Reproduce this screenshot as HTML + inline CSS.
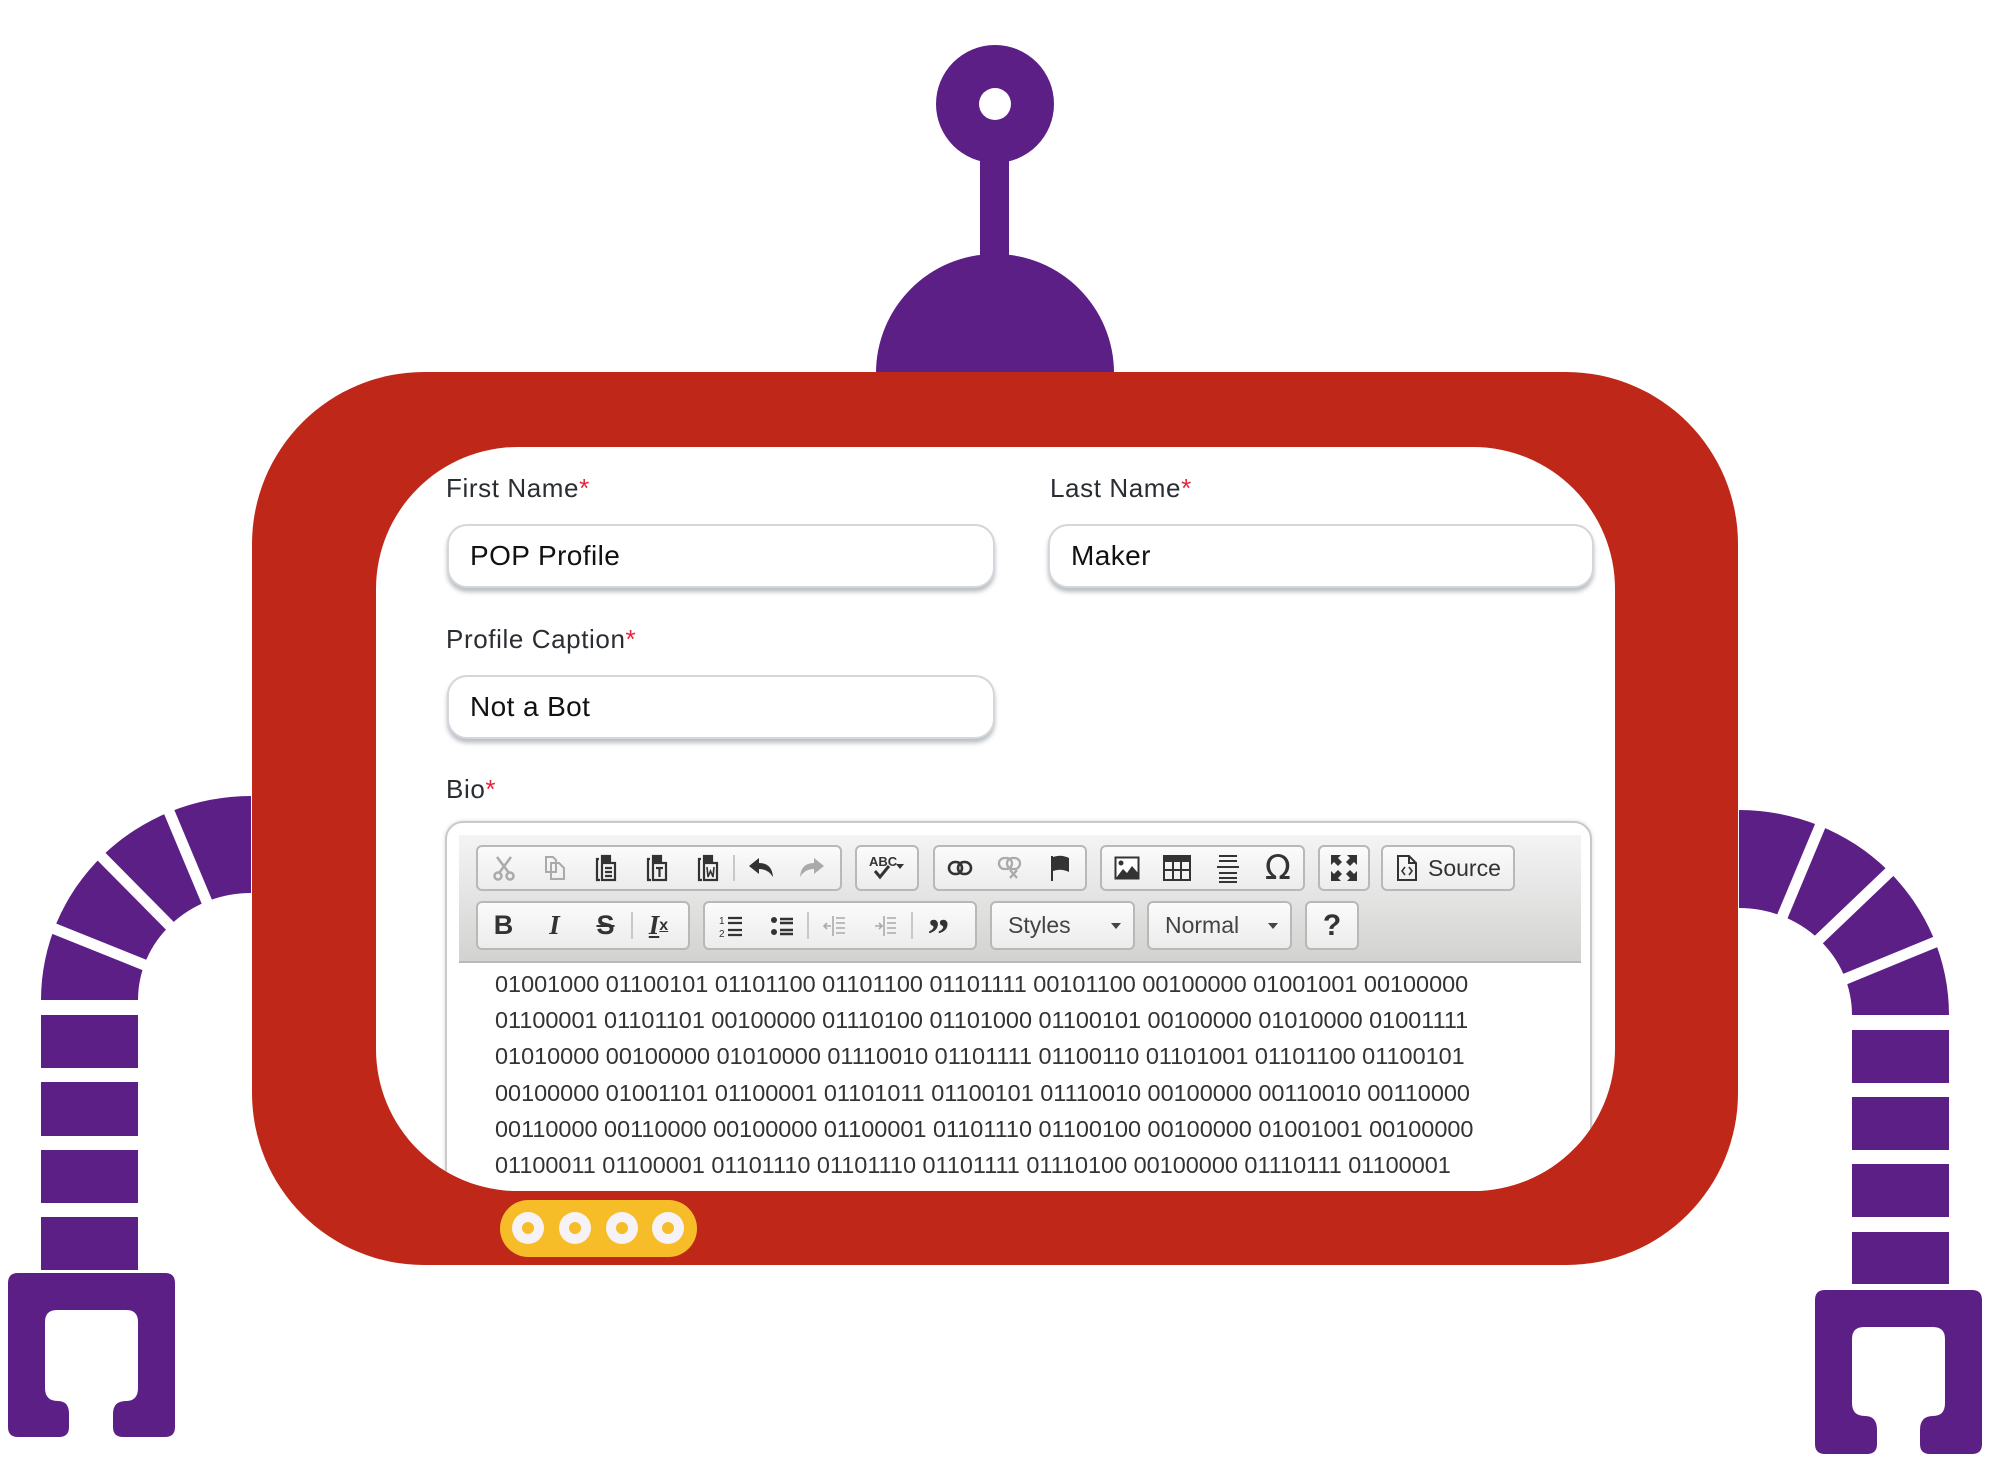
<!DOCTYPE html>
<html><head><meta charset="utf-8"><style>
*{box-sizing:border-box;margin:0;padding:0}
html,body{width:2000px;height:1470px;background:#fff;overflow:hidden;font-family:"Liberation Sans",sans-serif}
.abs{position:absolute}
#frame{position:absolute;left:252px;top:372px;width:1486px;height:893px;background:#bf2819;border-radius:172px}
#inner{position:absolute;left:376px;top:447px;width:1239px;height:744px;background:#fff;border-radius:142px;overflow:hidden}
.lbl{position:absolute;font-size:26px;letter-spacing:0.6px;color:#2a2e33;line-height:30px}
.lbl b{color:#e0283c;font-weight:normal}
.inp{position:absolute;height:64px;border:2px solid #d3d7db;border-radius:20px;background:#fff;box-shadow:0 4px 4px rgba(60,70,80,.35);font-size:28px;color:#111;padding-left:21px;line-height:60px;letter-spacing:0.4px}
#ed{position:absolute;left:69px;top:374px;width:1147px;height:600px;border:2px solid #c9c9c9;border-radius:18px;background:#fff;box-shadow:0 0 4px rgba(0,0,0,.15)}
#tb{position:absolute;left:12px;top:12px;width:1122px;height:128px;background:linear-gradient(#f4f4f4,#d2d3d1);border-bottom:2px solid #b9b9b9}
.g{position:absolute;border:2px solid #b8b8b8;border-radius:6px;background:linear-gradient(#fbfbfb,#ececec);display:flex;align-items:center}
.ic{width:51px;height:100%;display:flex;align-items:center;justify-content:center}
.sep{width:2px;height:60%;background:#c8c8c8}
.txt{position:absolute;left:48px;top:143px;font-size:23.45px;line-height:36.2px;color:#333;white-space:nowrap}
.dd{font-size:23px;color:#444;padding-left:16px;width:100%;position:relative}
.dd:after{content:"";position:absolute;right:12px;top:11px;border:5px solid transparent;border-top:6px solid #444}
</style></head><body>
<svg class="abs" style="left:0;top:0" width="2000" height="1470">
<g fill="#5c1f86">
<circle cx="995" cy="104" r="59"/>
<rect x="980" y="150" width="29" height="120"/>
<circle cx="995" cy="373" r="119"/>
<path d="M251 796 A210 204 0 0 0 41 1000 L138 1000 A113 107 0 0 1 251 893 Z"/>
<rect x="41" y="1015" width="97" height="53"/>
<rect x="41" y="1082" width="97" height="54"/>
<rect x="41" y="1150" width="97" height="53"/>
<rect x="41" y="1217" width="97" height="53"/>
<path d="M18 1273 H165 Q175 1273 175 1283 V1427 Q175 1437 165 1437 H123 Q113 1437 113 1427 V1414 Q113 1401 126 1401 Q138 1401 138 1388 V1322 Q138 1310 126 1310 H57 Q45 1310 45 1322 V1388 Q45 1401 58 1401 Q69 1401 69 1414 V1427 Q69 1437 59 1437 H18 Q8 1437 8 1427 V1283 Q8 1273 18 1273 Z"/>
<path d="M1739 810 A210 205 0 0 1 1949 1015 L1852 1015 A113 107 0 0 0 1739 908 Z"/>
<rect x="1852" y="1030" width="97" height="53"/>
<rect x="1852" y="1097" width="97" height="53"/>
<rect x="1852" y="1164" width="97" height="53"/>
<rect x="1852" y="1232" width="97" height="52"/>
<path d="M1825 1290 H1972 Q1982 1290 1982 1300 V1444 Q1982 1454 1972 1454 H1930 Q1920 1454 1920 1444 V1430 Q1920 1416 1933 1416 Q1945 1416 1945 1403 V1339 Q1945 1327 1933 1327 H1864 Q1852 1327 1852 1339 V1403 Q1852 1416 1865 1416 Q1877 1416 1877 1430 V1444 Q1877 1454 1867 1454 H1825 Q1815 1454 1815 1444 V1300 Q1815 1290 1825 1290 Z"/>
</g>
<circle cx="995" cy="104" r="16" fill="#fff"/>
<g stroke="#fff" stroke-width="11">
<line x1="40" y1="923" x2="152" y2="968"/>
<line x1="88" y1="843" x2="178" y2="934"/>
<line x1="160" y1="790" x2="209" y2="907"/>
<line x1="1826" y1="812" x2="1780" y2="922"/>
<line x1="1900" y1="862" x2="1812" y2="946"/>
<line x1="1950" y1="936" x2="1838" y2="982"/>
</g>
</svg>
<div id="frame"></div>
<div id="inner">
<div class="lbl" style="left:70px;top:26px">First Name<b>*</b></div>
<div class="lbl" style="left:674px;top:26px">Last Name<b>*</b></div>
<div class="inp" style="left:71px;top:77px;width:548px">POP Profile</div>
<div class="inp" style="left:672px;top:77px;width:546px">Maker</div>
<div class="lbl" style="left:70px;top:177px">Profile Caption<b>*</b></div>
<div class="inp" style="left:71px;top:228px;width:548px">Not a Bot</div>
<div class="lbl" style="left:70px;top:327px">Bio<b>*</b></div>
<div id="ed">
<div id="tb">
<div class="g" style="left:17px;top:10px;width:366px;height:46px">
<span class="ic"><svg width="24" height="26" viewBox="0 0 24 26" fill="none" stroke="#aaa" stroke-width="2.5"><path d="M5 2 L17 18 M19 2 L7 18"/><circle cx="6" cy="21" r="3.5"/><circle cx="18" cy="21" r="3.5"/></svg></span>
<span class="ic"><svg width="22" height="26" viewBox="0 0 22 26" fill="none" stroke="#aaa" stroke-width="2"><path d="M2 2 H9 L12 5 V17 H2Z M7 8 H15 L20 13 V24 H7Z"/></svg></span>
<span class="ic"><svg width="24" height="28" viewBox="0 0 24 28" fill="none" stroke="#333" stroke-width="2.2"><path d="M5 5 H3 V26 H6"/><rect x="8" y="2" width="8" height="5" fill="#333"/><rect x="8" y="9" width="13" height="17"/><path d="M11 14 H18 M11 18 H18 M11 22 H18"/></svg></span>
<span class="ic"><svg width="24" height="28" viewBox="0 0 24 28" fill="none" stroke="#333" stroke-width="2.2"><path d="M5 5 H3 V26 H6"/><rect x="8" y="2" width="8" height="5" fill="#333"/><rect x="8" y="9" width="13" height="17"/><path d="M11 14 H18 M14.5 14 V23"/></svg></span>
<span class="ic"><svg width="24" height="28" viewBox="0 0 24 28" fill="none" stroke="#333" stroke-width="2.2"><path d="M5 5 H3 V26 H6"/><rect x="8" y="2" width="8" height="5" fill="#333"/><rect x="8" y="9" width="13" height="17"/><path d="M11 13 L12 23 L14.5 17 L17 23 L18 13" stroke-width="1.6"/></svg></span>
<span class="sep"></span>
<span class="ic"><svg width="26" height="20" viewBox="0 0 26 20"><path d="M1 8 L11 0 V5 Q24 5 25 19 Q20 11 11 11 V16 Z" fill="#333"/></svg></span>
<span class="ic"><svg width="26" height="20" viewBox="0 0 26 20"><path d="M25 8 L15 0 V5 Q2 5 1 19 Q6 11 15 11 V16 Z" fill="#aaa"/></svg></span>
</div>
<div class="g" style="left:396px;top:10px;width:64px;height:46px;justify-content:center"><svg width="40" height="30" viewBox="0 0 40 30"><text x="2" y="13" font-size="13" font-family="Liberation Sans" font-weight="bold" fill="#333">ABC</text><path d="M8 18 L13 24 L22 13" stroke="#333" stroke-width="3" fill="none"/><path d="M29 11 H37 L33 16Z" fill="#333"/></svg></div>
<div class="g" style="left:474px;top:10px;width:154px;height:46px">
<span class="ic"><svg width="26" height="16" viewBox="0 0 26 16" fill="none" stroke="#333" stroke-width="2.6"><rect x="2" y="2" width="13" height="12" rx="6"/><rect x="11" y="2" width="13" height="12" rx="6"/></svg></span>
<span class="ic"><svg width="26" height="24" viewBox="0 0 26 24" fill="none" stroke="#aaa" stroke-width="2.3"><rect x="2" y="2" width="13" height="11" rx="5.5"/><rect x="10" y="2" width="13" height="11" rx="5.5"/><path d="M13 14 L20 22 M20 14 L13 22"/></svg></span>
<span class="ic"><svg width="22" height="28" viewBox="0 0 22 28"><rect x="2" y="2" width="2" height="25" fill="#333"/><path d="M4 3 Q12 0 20 4 V18 Q12 14 4 17Z" fill="#333"/></svg></span>
</div>
<div class="g" style="left:641px;top:10px;width:205px;height:46px">
<span class="ic"><svg width="26" height="24" viewBox="0 0 26 24"><rect x="1.5" y="1.5" width="23" height="21" fill="#fff" stroke="#333" stroke-width="2"/><circle cx="7" cy="7" r="2.5" fill="#333"/><path d="M2 22 L9 13 L13 17 L18 10 L24 17 V22Z" fill="#333"/></svg></span>
<span class="ic"><svg width="28" height="26" viewBox="0 0 28 26" fill="none" stroke="#333" stroke-width="2"><rect x="1" y="1" width="26" height="24"/><rect x="1" y="1" width="26" height="5" fill="#333"/><path d="M1 15 H27 M10 6 V25 M18 6 V25"/></svg></span>
<span class="ic"><svg width="24" height="30" viewBox="0 0 24 30" stroke="#333" stroke-width="2"><path d="M3 3 H21 M3 8 H21 M1 14 H23 M3 20 H21 M3 25 H21 M3 29 H21"/></svg></span>
<span class="ic" style="font-size:34px;color:#333;font-family:'DejaVu Sans',sans-serif">Ω</span>
</div>
<div class="g" style="left:859px;top:10px;width:52px;height:46px;justify-content:center"><svg width="28" height="28" viewBox="0 0 28 28" fill="#333"><path d="M1 1 H11 L8 4 L12 8 L8 12 L4 8 L1 11Z M27 1 H17 L20 4 L16 8 L20 12 L24 8 L27 11Z M1 27 H11 L8 24 L12 20 L8 16 L4 20 L1 17Z M27 27 H17 L20 24 L16 20 L20 16 L24 20 L27 17Z"/></svg></div>
<div class="g" style="left:922px;top:10px;width:134px;height:46px;padding-left:13px"><svg width="22" height="28" viewBox="0 0 22 28" fill="none" stroke="#333" stroke-width="2"><path d="M2 2 H13 L20 9 V26 H2Z M13 2 V9 H20"/><path d="M9 13 L6 17 L9 21 M13 13 L16 17 L13 21" stroke-width="1.6"/></svg><span style="font-size:23px;color:#333;margin-left:10px">Source</span></div>

<div class="g" style="left:17px;top:66px;width:214px;height:49px">
<span class="ic" style="font-size:27px;font-weight:bold;color:#333">B</span>
<span class="ic" style="font-size:27px;font-style:italic;font-family:'Liberation Serif',serif;font-weight:bold;color:#333">I</span>
<span class="ic" style="font-size:27px;font-weight:bold;color:#333;text-decoration:line-through">S</span>
<span class="sep"></span>
<span class="ic" style="font-size:27px;font-style:italic;font-family:'Liberation Serif',serif;font-weight:bold;color:#333;text-decoration:underline">I<sub style="font-size:16px;font-style:normal;font-family:'Liberation Sans'">x</sub></span>
</div>
<div class="g" style="left:244px;top:66px;width:274px;height:49px">
<span class="ic"><svg width="24" height="24" viewBox="0 0 24 24" stroke="#333" stroke-width="2.2"><path d="M9 4 H23 M9 9 H23 M9 16 H23 M9 21 H23"/><text x="0" y="10" font-size="10" fill="#333" stroke="none">1</text><text x="0" y="23" font-size="10" fill="#333" stroke="none">2</text></svg></span>
<span class="ic"><svg width="24" height="24" viewBox="0 0 24 24" stroke="#333" stroke-width="2.4"><path d="M10 5 H23 M10 9 H23 M10 16 H23 M10 20 H23"/><circle cx="4" cy="6" r="3" fill="#333" stroke="none"/><circle cx="4" cy="18" r="3" fill="#333" stroke="none"/></svg></span>
<span class="sep"></span>
<span class="ic"><svg width="24" height="24" viewBox="0 0 24 24" stroke="#aaa" stroke-width="1.6" fill="none"><path d="M10 2 V22 M13 4 H22 M13 9 H22 M13 14 H22 M13 19 H22 M8 12 H1 M4 9 L1 12 L4 15"/></svg></span>
<span class="ic"><svg width="24" height="24" viewBox="0 0 24 24" stroke="#aaa" stroke-width="1.6" fill="none"><path d="M10 2 V22 M13 4 H22 M13 9 H22 M13 14 H22 M13 19 H22 M1 12 H8 M5 9 L8 12 L5 15"/></svg></span>
<span class="sep"></span>
<span class="ic" style="font-size:44px;font-weight:bold;color:#333;font-family:'Liberation Serif',serif;padding-top:18px">”</span>
</div>
<div class="g" style="left:531px;top:66px;width:145px;height:49px"><span class="dd">Styles</span></div>
<div class="g" style="left:688px;top:66px;width:145px;height:49px"><span class="dd">Normal</span></div>
<div class="g" style="left:846px;top:66px;width:54px;height:49px;justify-content:center;font-size:30px;font-weight:bold;color:#333">?</div>
</div>
<div class="txt">01001000 01100101 01101100 01101100 01101111 00101100 00100000 01001001 00100000<br>01100001 01101101 00100000 01110100 01101000 01100101 00100000 01010000 01001111<br>01010000 00100000 01010000 01110010 01101111 01100110 01101001 01101100 01100101<br>00100000 01001101 01100001 01101011 01100101 01110010 00100000 00110010 00110000<br>00110000 00110000 00100000 01100001 01101110 01100100 00100000 01001001 00100000<br>01100011 01100001 01101110 01101110 01101111 01110100 00100000 01110111 01100001</div>
</div>
</div>
<svg class="abs" style="left:0;top:0" width="2000" height="1470">
<rect x="500" y="1200" width="197" height="57" rx="28.5" fill="#f6bd29"/>
<g fill="#f7f2f5"><circle cx="528" cy="1228" r="16"/><circle cx="575" cy="1228" r="16"/><circle cx="622" cy="1228" r="16"/><circle cx="668" cy="1228" r="16"/></g>
<g fill="#f6bd29"><circle cx="528" cy="1228" r="6"/><circle cx="575" cy="1228" r="6"/><circle cx="622" cy="1228" r="6"/><circle cx="668" cy="1228" r="6"/></g>
</svg>
</body></html>
